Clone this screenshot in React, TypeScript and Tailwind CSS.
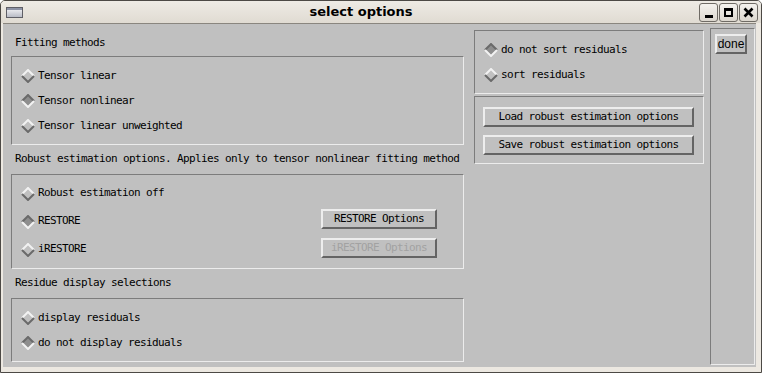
import React from 'react';

const font = "font-['DejaVu_Sans_Mono',monospace] text-[11px] tracking-[-0.62px]";
const mono = `${font} text-black`;

const Diamond: React.FC<{ on?: boolean }> = ({ on }) => (
  <svg width="14" height="14" viewBox="0 0 14 14" className="shrink-0">
    <polygon points="7,1 13,7 7,13 1,7" fill={on ? '#8e8e8e' : '#c0c0c0'} />
    <polyline points="1,7 7,1 13,7" fill="none" stroke={on ? '#6a6a6a' : '#f2f2f2'} strokeWidth="2" />
    <polyline points="1,7 7,13 13,7" fill="none" stroke={on ? '#f2f2f2' : '#6a6a6a'} strokeWidth="2" />
  </svg>
);

const Radio: React.FC<{ label: string; on?: boolean; h?: string }> = ({ label, on, h = 'h-[25px]' }) => (
  <div className={`flex items-center gap-[3px] pt-[1px] ${h}`}>
    <Diamond on={on} />
    <span className={mono}>{label}</span>
  </div>
);

const Button: React.FC<{ label: string; disabled?: boolean; className?: string }> = ({ label, disabled, className = '' }) => (
  <div
    className={`flex items-center justify-center bg-[#c0c0c0] border-2 border-t-[#ededed] border-l-[#ededed] border-b-[#646464] border-r-[#646464] ${className}`}
  >
    <span className={disabled ? `${font} text-[#a2a2a2]` : mono}>{label}</span>
  </div>
);

const GroupBox: React.FC<{ className?: string; children: React.ReactNode }> = ({ className = '', children }) => (
  <div className={`border border-t-[#7c7c7c] border-l-[#7c7c7c] border-b-[#ececec] border-r-[#ececec] ${className}`}>
    {children}
  </div>
);

const Label: React.FC<{ text: string; h: string }> = ({ text, h }) => (
  <div className={`flex items-center pl-[4px] ${h}`}>
    <span className={mono}>{text}</span>
  </div>
);

const TitleBtn: React.FC<{ children: React.ReactNode }> = ({ children }) => (
  <div className="w-[19px] h-[19px] rounded-[3px] border border-[#6f6b65] bg-gradient-to-b from-[#f4f2ee] to-[#dcd7ce] flex items-center justify-center">
    {children}
  </div>
);

export default function App() {
  return (
    <div className="w-[762px] h-[373px] flex flex-col bg-[#ece8e1] border border-[#4c4945] rounded-t-[5px] overflow-hidden">
      {/* Title bar */}
      <div className="h-[22px] flex items-center bg-gradient-to-b from-[#eeebe5] to-[#e0dbd2]">
        <div className="ml-[5px] w-[17px] h-[11px] border border-[#5f5f66] bg-gradient-to-b from-[#f6f6f8] to-[#b9bcc6] flex flex-col">
          <div className="h-[2px] bg-[#8d93a6]" />
        </div>
        <div className="flex-1 text-center font-['DejaVu_Sans',sans-serif] font-bold text-[13px] text-black">
          select options
        </div>
        <div className="flex gap-[1px] mr-[3px]">
          <TitleBtn>
            <div className="w-[8px] h-[3px] bg-black mt-[8px]" />
          </TitleBtn>
          <TitleBtn>
            <div className="w-[9px] h-[9px] border-[2px] border-t-[3px] border-black" />
          </TitleBtn>
          <TitleBtn>
            <svg width="11" height="11" viewBox="0 0 11 11">
              <path d="M1.5 1.5 L9.5 9.5 M9.5 1.5 L1.5 9.5" stroke="black" strokeWidth="2.6" />
            </svg>
          </TitleBtn>
        </div>
      </div>

      {/* Body */}
      <div className="flex-1 flex ml-[2px] mr-[5px] mb-[5px] bg-[#c0c0c0] border-t border-[#8a867f]">
        {/* Left column */}
        <div className="w-[467px] pl-[8px] pt-[6px] flex flex-col">
          <Label text="Fitting methods" h="h-[26px]" />
          <GroupBox className="w-[453px] h-[89px] pl-[9px] pt-[6px]">
            <Radio label="Tensor linear" />
            <Radio label="Tensor nonlinear" on />
            <Radio label="Tensor linear unweighted" />
          </GroupBox>

          <Label text="Robust estimation options. Applies only to tensor nonlinear fitting method" h="h-[29px]" />
          <GroupBox className="w-[453px] h-[95px] pl-[9px] pt-[4px]">
            <Radio label="Robust estimation off" h="h-[28px]" />
            <div className="flex h-[28px] items-start">
              <Radio label="RESTORE" on h="h-[28px]" />
              <Button label="RESTORE Options" className="ml-auto mr-[26px] mt-[2px] w-[116px] h-[20px]" />
            </div>
            <div className="flex h-[28px] items-start">
              <Radio label="iRESTORE" h="h-[28px]" />
              <Button label="iRESTORE Options" disabled className="ml-auto mr-[26px] mt-[3px] w-[116px] h-[20px]" />
            </div>
          </GroupBox>

          <Label text="Residue display selections" h="h-[29px]" />
          <GroupBox className="w-[453px] h-[64px] pl-[9px] pt-[6px]">
            <Radio label="display residuals" />
            <Radio label="do not display residuals" on />
          </GroupBox>
        </div>

        {/* Middle column */}
        <div className="ml-[4px] w-[230px] pt-[6px] flex flex-col">
          <GroupBox className="h-[64px] pl-[9px] pt-[6px]">
            <Radio label="do not sort residuals" on />
            <Radio label="sort residuals" />
          </GroupBox>
          <GroupBox className="mt-[2px] h-[68px] pl-[8px] pr-[8px] pt-[10px] flex flex-col gap-[8px]">
            <Button label="Load robust estimation options" className="w-[211px] h-[20px]" />
            <Button label="Save robust estimation options" className="w-[211px] h-[20px]" />
          </GroupBox>
        </div>

        {/* Done column */}
        <GroupBox className="ml-[6px] mt-[4px] mb-[2px] w-[45px] pl-[4px] pt-[5px]">
          <div className="w-[32px] h-[20px] flex items-center justify-center bg-[#c0c0c0] border-2 border-t-[#ededed] border-l-[#ededed] border-b-[#646464] border-r-[#646464]">
            <span className="font-['Liberation_Sans',sans-serif] text-[12px] text-black">done</span>
          </div>
        </GroupBox>
      </div>
    </div>
  );
}
